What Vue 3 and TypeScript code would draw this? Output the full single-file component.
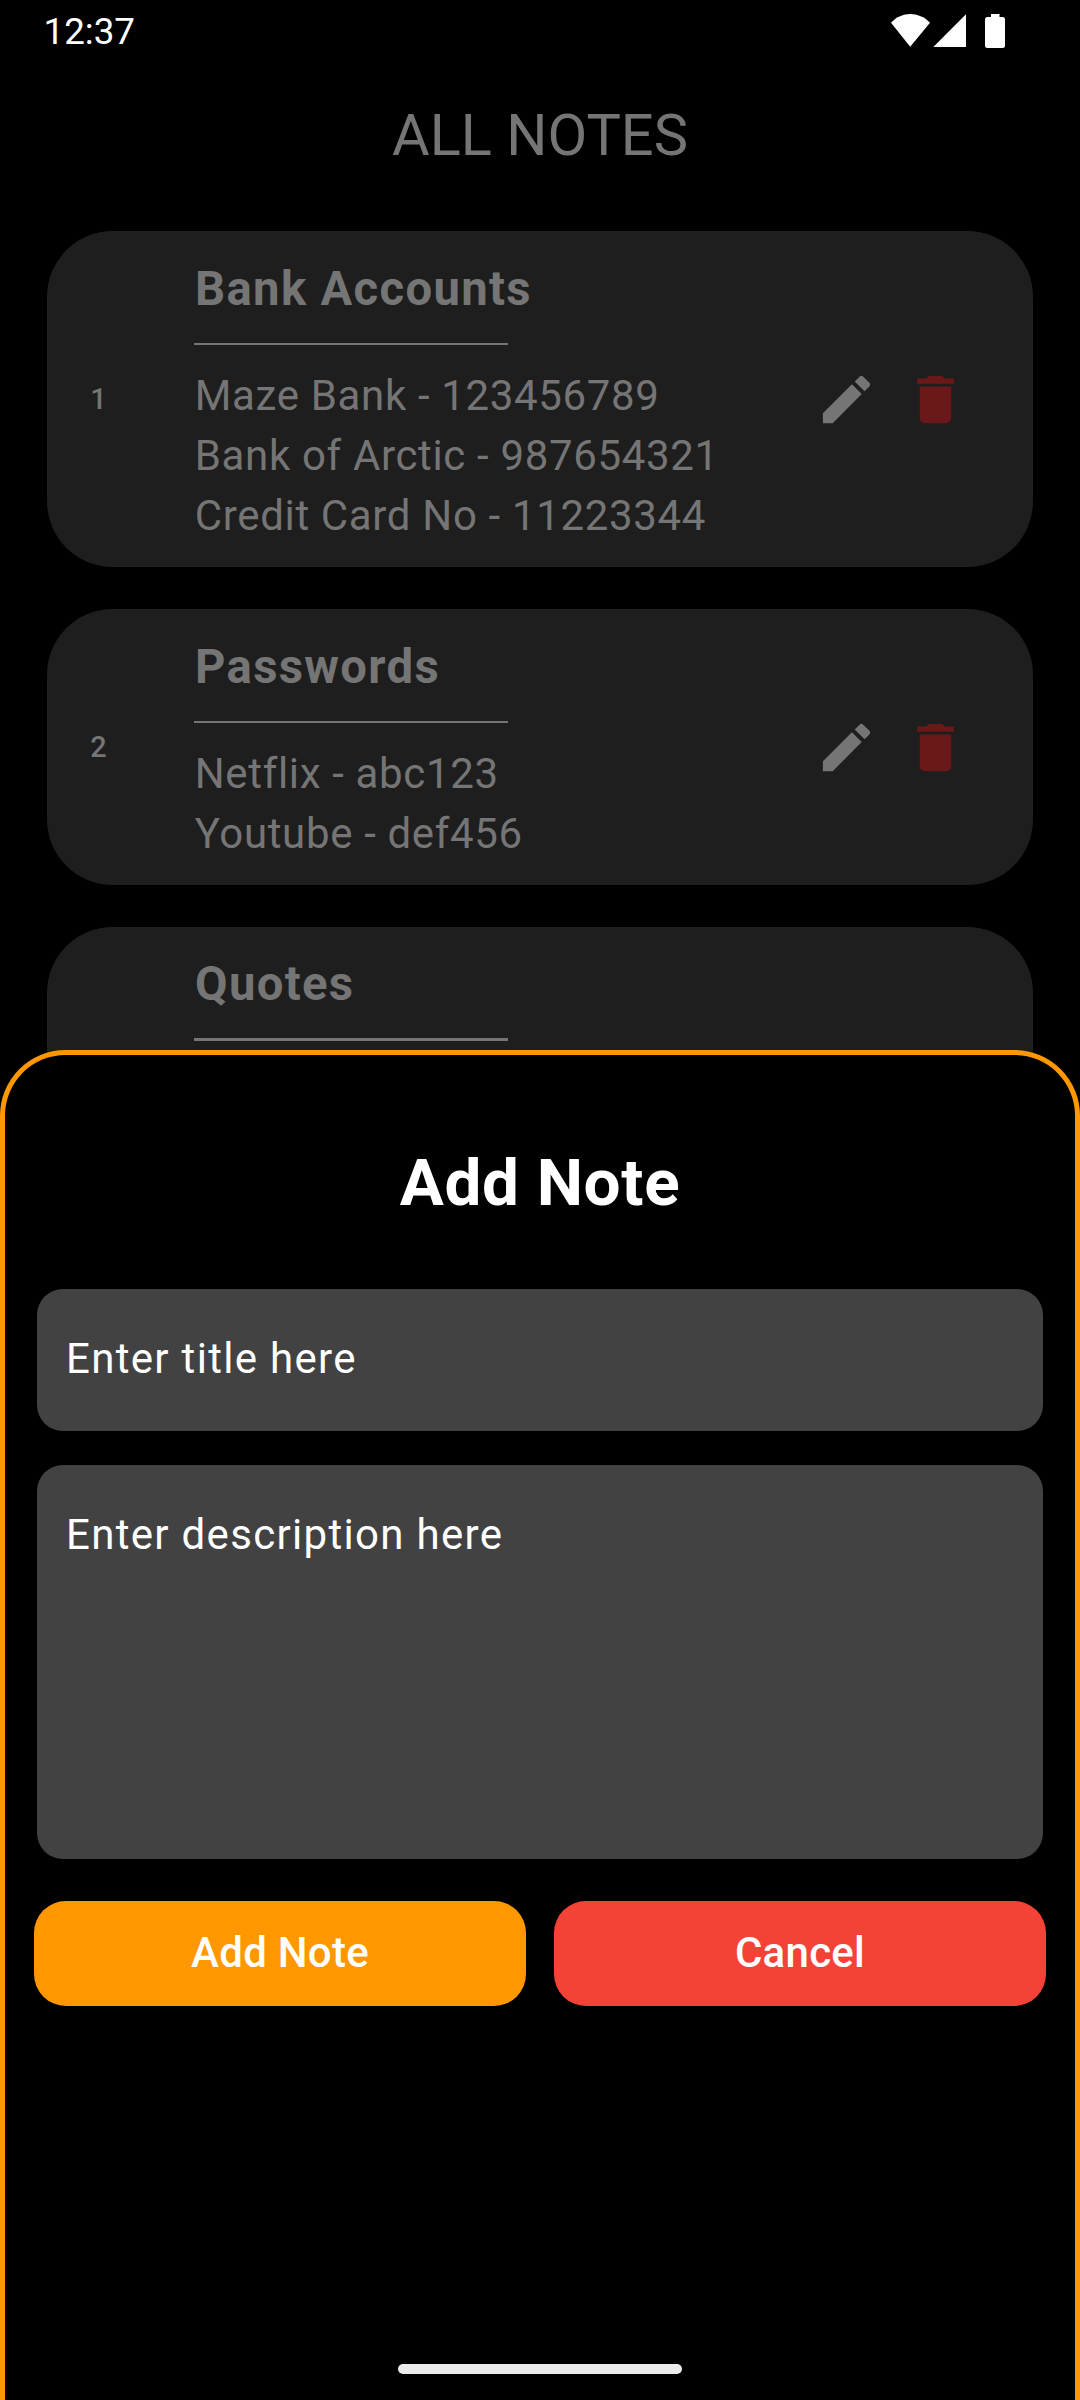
<script setup lang="ts">
interface Note {
  title: string
  lines: string[]
}

const notes: Note[] = [
  {
    title: 'Bank Accounts',
    lines: ['Maze Bank - 123456789', 'Bank of Arctic - 987654321', 'Credit Card No - 11223344'],
  },
  { title: 'Passwords', lines: ['Netflix - abc123', 'Youtube - def456'] },
  { title: 'Quotes', lines: [] },
]
</script>

<template>
  <div class="screen">
    <header class="status">
      <span class="clock">12:37</span>
      <svg class="status-icons" width="116" height="36" viewBox="0 0 116 36" fill="#fff">
        <path d="M1 9.700C6.500 3.800 13.500 1 20.200 1S34.500 3.800 40 9.700L20.200 33.700Z" />
        <path d="M76 1.200V34H43.300Z" />
        <path d="M101 1h8.500v3h3a2.500 2.500 0 0 1 2.500 2.500V32.500a2.500 2.500 0 0 1-2.500 2.500h-15a2.500 2.500 0 0 1-2.500-2.500V6.500a2.500 2.500 0 0 1 2.500-2.500h3.500z" />
      </svg>
    </header>

    <h1 class="page-title">ALL NOTES</h1>

    <main class="notes">
      <article v-for="(note, i) in notes" :key="note.title" class="card">
        <span class="index">{{ i + 1 }}</span>
        <div class="body">
          <h2 class="note-title">{{ note.title }}</h2>
          <div class="rule"></div>
          <p v-for="line in note.lines" :key="line" class="line">{{ line }}</p>
        </div>
        <div v-if="note.lines.length" class="actions">
          <svg class="edit" viewBox="0 0 24 24">
            <path d="M3 17.250V21h3.750L17.810 9.940l-3.750-3.750L3 17.250zM20.710 7.040c.39-.39.39-1.020 0-1.410l-2.340-2.340c-.39-.39-1.020-.39-1.410 0l-1.830 1.830 3.750 3.750 1.830-1.830z" />
          </svg>
          <svg class="delete" viewBox="0 0 24 24">
            <path d="M6 19c0 1.100.9 2 2 2h8c1.100 0 2-.9 2-2V7H6v12zM19 4h-3.500l-1-1h-5l-1 1H5v2h14V4z" />
          </svg>
        </div>
      </article>
    </main>

    <section class="sheet">
      <h2 class="sheet-title">Add Note</h2>
      <div class="field">Enter title here</div>
      <div class="field tall">Enter description here</div>
      <div class="buttons">
        <button class="btn add">Add Note</button>
        <button class="btn cancel">Cancel</button>
      </div>
      <div class="home-bar"></div>
    </section>
  </div>
</template>

<style>
body {
  background: #000;
}
</style>

<style scoped>
.screen {
  position: relative;
  box-sizing: border-box;
  width: 1080px;
  height: 2400px;
  overflow: hidden;
  background: #000;
  font-family: Roboto, sans-serif;
  color: #757575;
}
h1,
h2,
p {
  margin: 0;
}
.status {
  display: flex;
  justify-content: space-between;
  box-sizing: border-box;
  height: 63px;
  padding: 11px 74px 0 43.5px;
}
.clock {
  font-size: 36.75px;
  line-height: 42px;
  color: #fff;
}
.status-icons {
  margin-top: 2px;
}
.page-title {
  height: 168px;
  font-size: 57.75px;
  font-weight: 400;
  line-height: 144px;
  text-align: center;
}
.notes {
  display: flex;
  flex-direction: column;
  gap: 42px;
  padding: 0 47.25px;
}
.card {
  display: flex;
  align-items: center;
  box-sizing: border-box;
  padding: 30px 65.75px 21px 42px;
  border-radius: 65.625px;
  background: #1e1e1e;
}
.index {
  box-sizing: border-box;
  width: 105px;
  padding: 0 0 9px 1px;
  font-size: 28.875px;
  font-weight: 500;
  line-height: 34px;
}
.body {
  flex: 1;
}
.note-title {
  padding-left: 0.75px;
  font-size: 47.25px;
  font-weight: 700;
  line-height: 56px;
  letter-spacing: 1.32px;
}
.rule {
  width: 314px;
  height: 2px;
  margin: 26px 0 21px;
  background: #757575;
}
.line {
  padding-left: 0.5px;
  font-size: 42px;
  line-height: 60px;
  letter-spacing: 0.656px;
  white-space: nowrap;
}
.actions {
  display: flex;
  gap: 26.25px;
  padding-bottom: 9px;
}
.actions svg {
  width: 63px;
  height: 63px;
}
.edit {
  fill: #757575;
}
.delete {
  fill: #6b1818;
}
.card:last-child {
  align-items: flex-start;
  height: 300px;
  padding-top: 29px;
}
.card:last-child .rule {
  height: 3px;
}
.card:last-child .index {
  visibility: hidden;
}
.sheet {
  position: absolute;
  left: 0;
  right: 0;
  top: 1050px;
  bottom: 0;
  box-sizing: border-box;
  display: flex;
  flex-direction: column;
  align-items: center;
  padding: 84px 29px 0;
  border: 5px solid #ff9800;
  border-bottom: 0;
  border-radius: 65.625px 65.625px 0 0;
  background: #000;
  color: #fff;
}
.sheet-title {
  height: 150px;
  font-size: 65.625px;
  font-weight: 700;
  line-height: 88px;
  letter-spacing: 0.656px;
}
.field {
  box-sizing: border-box;
  width: 1006px;
  height: 142px;
  padding: 39px 29px;
  border-radius: 26px;
  background: #424242;
  font-size: 42px;
  line-height: 62px;
  letter-spacing: 1.31px;
}
.field.tall {
  height: 394px;
  margin-top: 34px;
}
.buttons {
  display: flex;
  gap: 28px;
  align-self: stretch;
  margin-top: 42px;
}
.btn {
  flex: 1;
  height: 105px;
  padding: 0 0 2px;
  border: 0;
  border-radius: 32px;
  color: #fff;
  font-family: inherit;
  font-size: 42px;
  font-weight: 500;
  letter-spacing: 0.26px;
}
.add {
  background: #ff9800;
}
.cancel {
  background: #f44336;
}
.home-bar {
  width: 284px;
  height: 10px;
  margin: auto 0 26px;
  border-radius: 5px;
  background: #ebebeb;
}
</style>
